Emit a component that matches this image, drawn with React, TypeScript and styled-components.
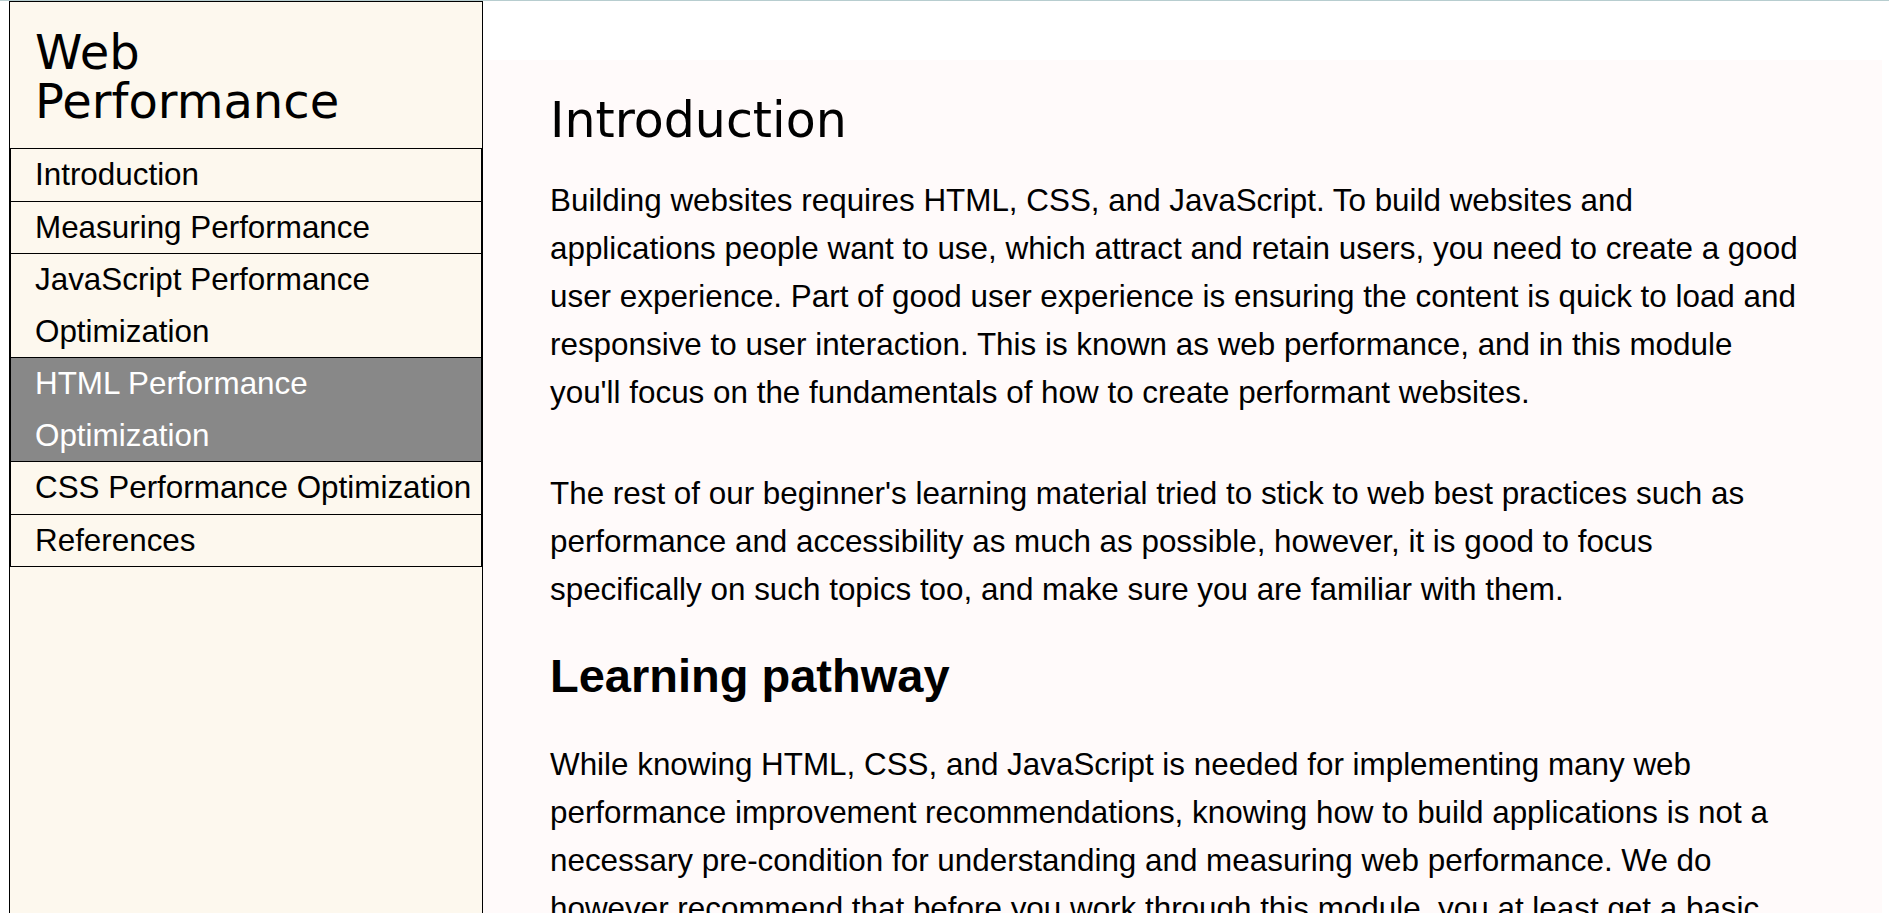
import React from "react";
import styled, { createGlobalStyle } from "styled-components";

const GlobalStyle = createGlobalStyle`
  html, body {
    margin: 0;
    padding: 0;
    background: #ffffff;
  }
  body {
    font-family: "Liberation Sans", Arial, sans-serif;
    color: #000;
  }
  *, *::before, *::after {
    box-sizing: border-box;
  }
`;

const Page = styled.div`
  display: flex;
  align-items: stretch;
  min-height: 100vh;
  border-top: 1px solid #b7cdcf;
`;

const Sidebar = styled.aside`
  flex: 0 0 474px;
  width: 474px;
  margin-left: 9px;
  border: 1px solid #000;
  border-bottom: none;
  background: #fdf8ee;
`;

const SiteTitle = styled.h1`
  margin: 0;
  padding: 26px 60px 22px 25px;
  font-family: "DejaVu Sans", Verdana, sans-serif;
  font-weight: normal;
  font-size: 48px;
  line-height: 49px;
  border-bottom: 1px solid #000;
`;

const NavList = styled.ul`
  list-style: none;
  margin: 0;
  padding: 0;
`;

const NavItem = styled.li<{ $active?: boolean }>`
  border-left: 1px solid #000;
  border-right: 1px solid #000;
  border-bottom: 1px solid #000;
  padding: 0 6px 0 24px;
  font-size: 31.4px;
  line-height: 51.5px;
  background: ${(p) => (p.$active ? "#888888" : "transparent")};
  color: ${(p) => (p.$active ? "#ffffff" : "#000000")};
  cursor: pointer;
`;

const Main = styled.main`
  flex: 1 1 auto;
  margin: 59px 7px 0 0;
  padding: 33px 79px 0 67px;
  background: #fffafa;
`;

const PageTitle = styled.h2`
  margin: 0 0 28px;
  font-family: "DejaVu Sans", Verdana, sans-serif;
  font-weight: normal;
  font-size: 49px;
  line-height: 56px;
`;

const SectionTitle = styled.h3`
  margin: 0 0 37px;
  font-family: "Liberation Sans", Arial, sans-serif;
  font-weight: bold;
  font-size: 47px;
  line-height: 56px;
`;

const Paragraph = styled.p<{ $after: number }>`
  margin: 0 0 ${(p) => p.$after}px;
  font-size: 31.4px;
  line-height: 48px;
`;

const navItems = [
  "Introduction",
  "Measuring Performance",
  "JavaScript Performance Optimization",
  "HTML Performance Optimization",
  "CSS Performance Optimization",
  "References",
];

export default function App() {
  return (
    <>
      <GlobalStyle />
      <Page>
        <Sidebar>
          <SiteTitle>Web Performance</SiteTitle>
          <NavList>
            {navItems.map((item) => (
              <NavItem key={item} $active={item === "HTML Performance Optimization"}>
                {item}
              </NavItem>
            ))}
          </NavList>
        </Sidebar>
        <Main>
          <PageTitle>Introduction</PageTitle>
          <Paragraph $after={53}>
            Building websites requires HTML, CSS, and JavaScript. To build websites and
            applications people want to use, which attract and retain users, you need to
            create a good user experience. Part of good user experience is ensuring the
            content is quick to load and responsive to user interaction. This is known as
            web performance, and in this module you'll focus on the fundamentals of how to
            create performant websites.
          </Paragraph>
          <Paragraph $after={34}>
            The rest of our beginner's learning material tried to stick to web best
            practices such as performance and accessibility as much as possible, however,
            it is good to focus specifically on such topics too, and make sure you are
            familiar with them.
          </Paragraph>
          <SectionTitle>Learning pathway</SectionTitle>
          <Paragraph $after={53}>
            While knowing HTML, CSS, and JavaScript is needed for implementing many web
            performance improvement recommendations, knowing how to build applications is
            not a necessary pre-condition for understanding and measuring web performance.
            We do however recommend that before you work through this module, you at least
            get a basic idea of web development by working through our Getting started with
            the web module.
          </Paragraph>
        </Main>
      </Page>
    </>
  );
}
